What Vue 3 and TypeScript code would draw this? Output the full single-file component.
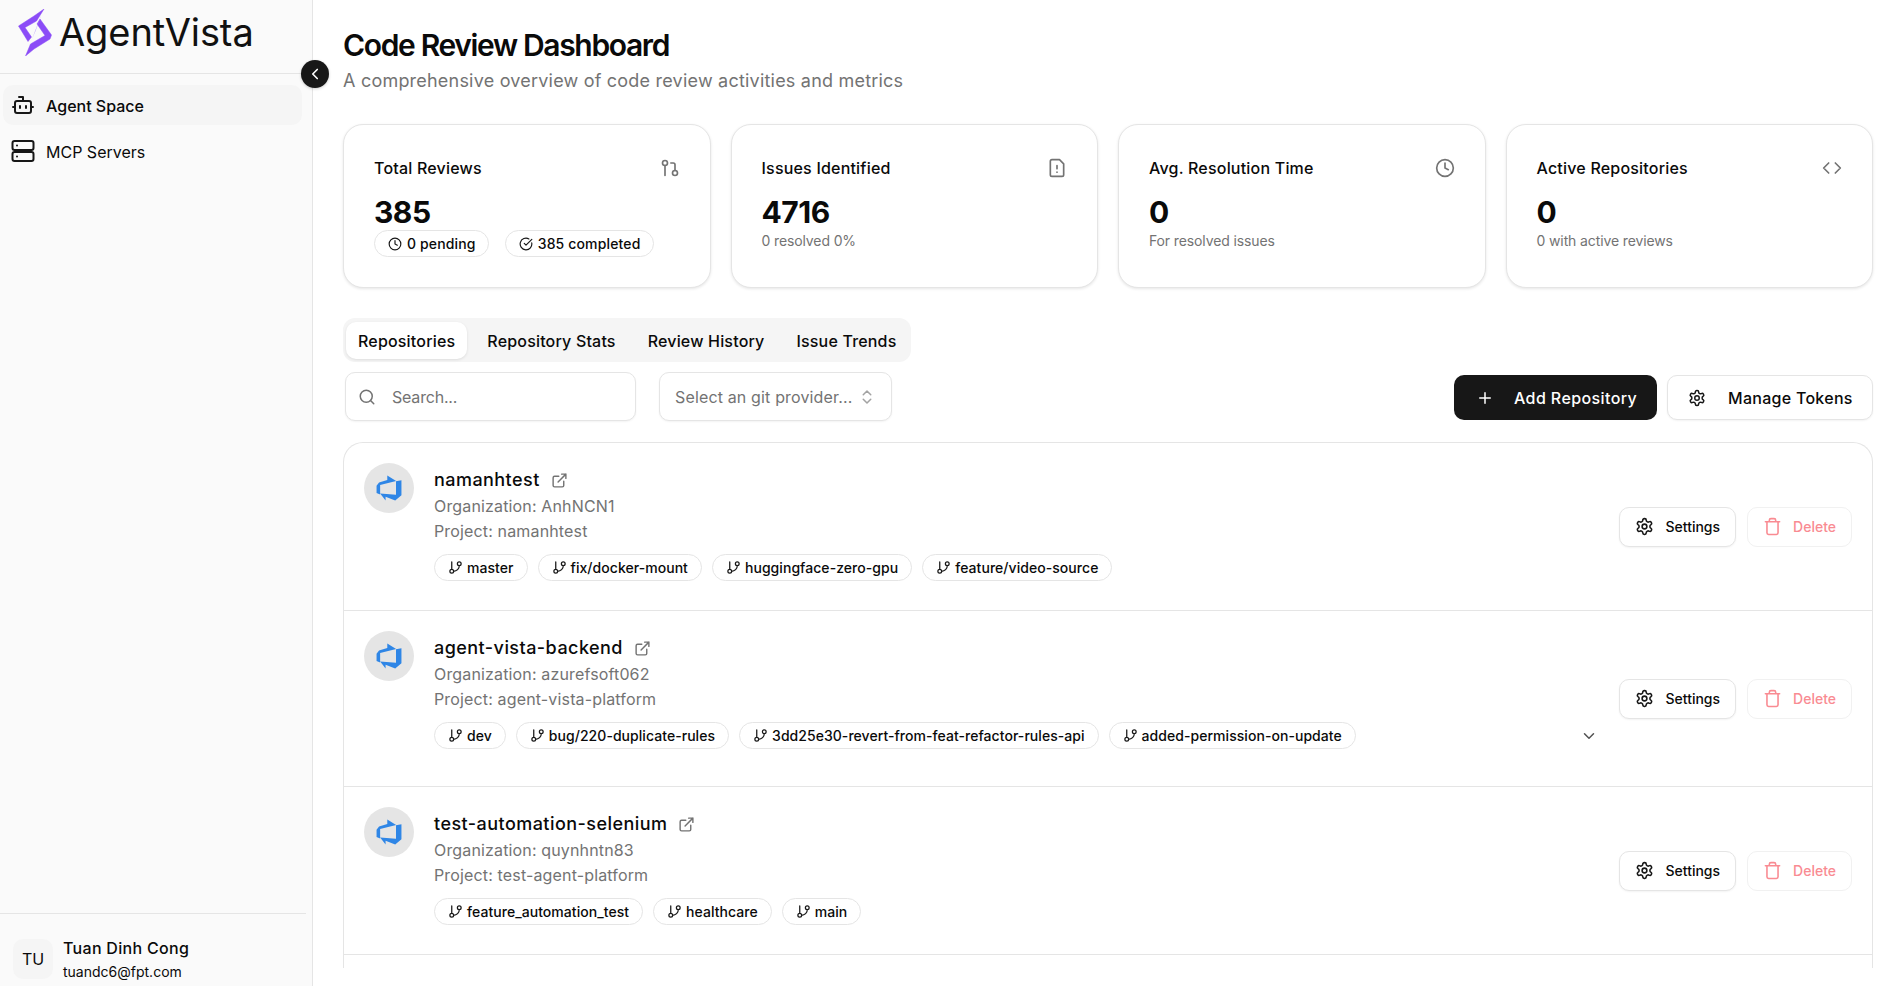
<script setup lang="ts">
interface Repo { name: string; org: string; project: string; branches: string[]; expand?: boolean }
const repos: Repo[] = [
  { name: 'namanhtest', org: 'AnhNCN1', project: 'namanhtest', branches: ['master', 'fix/docker-mount', 'huggingface-zero-gpu', 'feature/video-source'] },
  { name: 'agent-vista-backend', org: 'azurefsoft062', project: 'agent-vista-platform', branches: ['dev', 'bug/220-duplicate-rules', '3dd25e30-revert-from-feat-refactor-rules-api', 'added-permission-on-update'], expand: true },
  { name: 'test-automation-selenium', org: 'quynhntn83', project: 'test-agent-platform', branches: ['feature_automation_test', 'healthcare', 'main'] },
]
const tabs = ['Repositories', 'Repository Stats', 'Review History', 'Issue Trends']
</script>

<template>
  <div class="app">
    <aside class="side">
      <div class="brand">
        <svg class="logo" viewBox="0 0 34 47" width="34" height="47">
          <path fill="#8b4cf7" stroke="#8b4cf7" stroke-width=".5" stroke-linejoin="round" d="M0.500 17 L16 7 L26 0 L18.500 12 L7 18.500 L13.500 28 L10 32.500 Z" />
          <path fill="#8b4cf7" stroke="#8b4cf7" stroke-width=".5" stroke-linejoin="round" d="M22 10 L33.500 26 L32 30 L16 40 L7.500 47 L12.500 35 L27 26.500 L19 15 Z" />
          <path fill="#b592fa" d="M24 4 L14 30 L17.500 22 Z" />
        </svg>
        <span class="brand-name">AgentVista</span>
      </div>
      <button class="collapse">
        <svg viewBox="0 0 24 24" width="18" height="18" fill="none" stroke="#fff" stroke-width="2.2" stroke-linecap="round" stroke-linejoin="round"><path d="m15 18-6-6 6-6" /></svg>
      </button>
      <nav class="nav">
        <div class="nav-item active">
          <svg viewBox="0 0 24 24" width="24" height="24" fill="none" stroke="#171717" stroke-width="2" stroke-linecap="round" stroke-linejoin="round"><path d="M12 8V4H8" /><rect x="4" y="8" width="16" height="12" rx="2" /><path d="M2 14h2M20 14h2M15 13v2M9 13v2" /></svg>
          <span>Agent Space</span>
        </div>
        <div class="nav-item">
          <svg viewBox="0 0 24 24" width="24" height="24" fill="none" stroke="#171717" stroke-width="2" stroke-linecap="round" stroke-linejoin="round"><rect x="1.500" y="2" width="21" height="9" rx="2" /><rect x="1.500" y="13" width="21" height="9" rx="2" /><path d="M6 6.500h.01M6 17.500h.01" /></svg>
          <span class="plain">MCP Servers</span>
        </div>
      </nav>
      <div class="user">
        <div class="avatar">TU</div>
        <div class="user-text">
          <div class="user-name">Tuan Dinh Cong</div>
          <div class="user-mail">tuandc6@fpt.com</div>
        </div>
      </div>
    </aside>

    <main class="main">
      <h1 class="title">Code Review Dashboard</h1>
      <p class="subtitle">A comprehensive overview of code review activities and metrics</p>

      <section class="cards">
        <div class="card">
          <div class="card-head">
            <span>Total Reviews</span>
            <svg viewBox="0 0 24 24" width="20" height="20" fill="none" stroke="#737373" stroke-width="2" stroke-linecap="round" stroke-linejoin="round"><circle cx="18" cy="18" r="3" /><circle cx="6" cy="6" r="3" /><path d="M13 6h3a2 2 0 0 1 2 2v7M6 9v12" /></svg>
          </div>
          <div class="card-value">385</div>
          <div class="pills">
            <span class="pill">
              <svg viewBox="0 0 24 24" width="14" height="14" fill="none" stroke="#171717" stroke-width="2" stroke-linecap="round" stroke-linejoin="round"><circle cx="12" cy="12" r="10" /><path d="M12 6v6l4 2" /></svg>
              0 pending
            </span>
            <span class="pill">
              <svg viewBox="0 0 24 24" width="14" height="14" fill="none" stroke="#171717" stroke-width="2" stroke-linecap="round" stroke-linejoin="round"><path d="M21.800 10A10 10 0 1 1 17 3.300" /><path d="m9 11 3 3L22 4" /></svg>
              385 completed
            </span>
          </div>
        </div>
        <div class="card">
          <div class="card-head">
            <span>Issues Identified</span>
            <svg viewBox="0 0 24 24" width="20" height="20" fill="none" stroke="#737373" stroke-width="2" stroke-linecap="round" stroke-linejoin="round"><path d="M15 2H6a2 2 0 0 0-2 2v16a2 2 0 0 0 2 2h12a2 2 0 0 0 2-2V7Z" /><path d="M12 9v4M12 17h.01" /></svg>
          </div>
          <div class="card-value">4716</div>
          <div class="card-note">0 resolved 0%</div>
        </div>
        <div class="card">
          <div class="card-head">
            <span>Avg. Resolution Time</span>
            <svg viewBox="0 0 24 24" width="20" height="20" fill="none" stroke="#737373" stroke-width="2" stroke-linecap="round" stroke-linejoin="round"><circle cx="12" cy="12" r="10" /><path d="M12 6v6l4 2" /></svg>
          </div>
          <div class="card-value">0</div>
          <div class="card-note">For resolved issues</div>
        </div>
        <div class="card">
          <div class="card-head">
            <span>Active Repositories</span>
            <svg viewBox="0 0 24 24" width="20" height="20" fill="none" stroke="#737373" stroke-width="2" stroke-linecap="round" stroke-linejoin="round"><path d="m16 18 6-6-6-6M8 6l-6 6 6 6" /></svg>
          </div>
          <div class="card-value">0</div>
          <div class="card-note">0 with active reviews</div>
        </div>
      </section>

      <div class="tabs">
        <button v-for="(t, i) in tabs" :key="t" class="tab" :class="{ on: i === 0 }">{{ t }}</button>
      </div>

      <div class="toolbar">
        <div class="field search">
          <svg viewBox="0 0 24 24" width="18" height="18" fill="none" stroke="#737373" stroke-width="2" stroke-linecap="round" stroke-linejoin="round"><circle cx="11" cy="11" r="8" /><path d="m21 21-4.300-4.300" /></svg>
          <span>Search...</span>
        </div>
        <div class="field select">
          <span>Select an git provider...</span>
          <svg viewBox="0 0 24 24" width="18" height="18" fill="none" stroke="#a3a3a3" stroke-width="2" stroke-linecap="round" stroke-linejoin="round"><path d="m7 15 5 5 5-5M7 9l5-5 5 5" /></svg>
        </div>
        <div class="spacer"></div>
        <button class="btn dark">
          <svg viewBox="0 0 24 24" width="18" height="18" fill="none" stroke="#fff" stroke-width="2" stroke-linecap="round"><path d="M5 12h14M12 5v14" /></svg>
          Add Repository
        </button>
        <button class="btn light">
          <svg viewBox="0 0 24 24" width="18" height="18" fill="none" stroke="#171717" stroke-width="2" stroke-linecap="round" stroke-linejoin="round"><path d="M12.220 2h-.44a2 2 0 0 0-2 2v.18a2 2 0 0 1-1 1.730l-.43.25a2 2 0 0 1-2 0l-.15-.08a2 2 0 0 0-2.730.73l-.22.38a2 2 0 0 0 .73 2.730l.15.1a2 2 0 0 1 1 1.720v.51a2 2 0 0 1-1 1.740l-.15.09a2 2 0 0 0-.73 2.730l.22.38a2 2 0 0 0 2.730.73l.15-.08a2 2 0 0 1 2 0l.43.25a2 2 0 0 1 1 1.730V20a2 2 0 0 0 2 2h.44a2 2 0 0 0 2-2v-.18a2 2 0 0 1 1-1.730l.43-.25a2 2 0 0 1 2 0l.15.08a2 2 0 0 0 2.730-.73l.22-.39a2 2 0 0 0-.73-2.730l-.15-.08a2 2 0 0 1-1-1.740v-.5a2 2 0 0 1 1-1.740l.15-.09a2 2 0 0 0 .73-2.730l-.22-.38a2 2 0 0 0-2.730-.73l-.15.08a2 2 0 0 1-2 0l-.43-.25a2 2 0 0 1-1-1.730V4a2 2 0 0 0-2-2z" /><circle cx="12" cy="12" r="3" /></svg>
          Manage Tokens
        </button>
      </div>

      <section class="list">
        <article v-for="r in repos" :key="r.name" class="row" :class="{ tall: r.expand }">
          <div class="repo-left">
            <div class="repo-icon">
              <svg viewBox="0 0 18 18" width="28" height="28"><path fill="#2f86e6" d="M17 4v9.700l-4 3.300-6.200-2.300v2.300L3.300 12.600l10.200.8V4.600L17 4ZM13.600 4.500 7.900 1v2.900L2.600 5.400 1 7.500v4.700l2.300 1V7.100l10.300-2.600Z" /></svg>
            </div>
            <div class="repo-body">
              <div class="repo-name">
                {{ r.name }}
                <svg viewBox="0 0 24 24" width="17" height="17" fill="none" stroke="#737373" stroke-width="2" stroke-linecap="round" stroke-linejoin="round"><path d="M15 3h6v6M10 14 21 3M18 13v6a2 2 0 0 1-2 2H5a2 2 0 0 1-2-2V8a2 2 0 0 1 2-2h6" /></svg>
              </div>
              <div class="repo-meta">Organization: {{ r.org }}</div>
              <div class="repo-meta">Project: {{ r.project }}</div>
              <div class="branches">
                <span v-for="b in r.branches" :key="b" class="branch">
                  <svg viewBox="0 0 24 24" width="15" height="15" fill="none" stroke="#171717" stroke-width="2" stroke-linecap="round" stroke-linejoin="round"><path d="M6 3v12M18 9a3 3 0 1 0 0-6 3 3 0 0 0 0 6ZM6 21a3 3 0 1 0 0-6 3 3 0 0 0 0 6ZM18 9a9 9 0 0 1-9 9" /></svg>
                  {{ b }}
                </span>
                <svg v-if="r.expand" class="chev" viewBox="0 0 24 24" width="18" height="18" fill="none" stroke="#525252" stroke-width="2" stroke-linecap="round" stroke-linejoin="round"><path d="m6 9 6 6 6-6" /></svg>
              </div>
            </div>
          </div>
          <div class="actions">
            <button class="act">
              <svg viewBox="0 0 24 24" width="19" height="19" fill="none" stroke="#171717" stroke-width="2" stroke-linecap="round" stroke-linejoin="round"><path d="M12.220 2h-.44a2 2 0 0 0-2 2v.18a2 2 0 0 1-1 1.730l-.43.25a2 2 0 0 1-2 0l-.15-.08a2 2 0 0 0-2.730.73l-.22.38a2 2 0 0 0 .73 2.730l.15.1a2 2 0 0 1 1 1.720v.51a2 2 0 0 1-1 1.740l-.15.09a2 2 0 0 0-.73 2.730l.22.38a2 2 0 0 0 2.730.73l.15-.08a2 2 0 0 1 2 0l.43.25a2 2 0 0 1 1 1.730V20a2 2 0 0 0 2 2h.44a2 2 0 0 0 2-2v-.18a2 2 0 0 1 1-1.730l.43-.25a2 2 0 0 1 2 0l.15.08a2 2 0 0 0 2.730-.73l.22-.39a2 2 0 0 0-.73-2.730l-.15-.08a2 2 0 0 1-1-1.740v-.5a2 2 0 0 1 1-1.740l.15-.09a2 2 0 0 0 .73-2.730l-.22-.38a2 2 0 0 0-2.730-.73l-.15.08a2 2 0 0 1-2 0l-.43-.25a2 2 0 0 1-1-1.730V4a2 2 0 0 0-2-2z" /><circle cx="12" cy="12" r="3" /></svg>
              Settings
            </button>
            <button class="act danger">
              <svg viewBox="0 0 24 24" width="19" height="19" fill="none" stroke="#f98b92" stroke-width="2" stroke-linecap="round" stroke-linejoin="round"><path d="M3 6h18M19 6v14a2 2 0 0 1-2 2H7a2 2 0 0 1-2-2V6M8 6V4a2 2 0 0 1 2-2h4a2 2 0 0 1 2 2v2" /></svg>
              Delete
            </button>
          </div>
        </article>
      </section>
    </main>
  </div>
</template>

<style>
html, body { margin: 0; background: #fff; overflow: hidden; }
</style>

<style scoped>
.app { display: flex; width: 1878px; height: 986px; overflow: hidden; font-family: Inter, "Noto Sans", sans-serif; color: #0a0a0a; }
button { font-family: inherit; cursor: pointer; }

.side { position: relative; width: 313px; flex: none; box-sizing: border-box; height: 986px; background: #fafafa; border-right: 1px solid #e5e5e5; display: flex; flex-direction: column; }
.brand { height: 74px; box-sizing: border-box; border-bottom: 1px solid #e5e5e5; display: flex; align-items: center; gap: 7px; padding: 0 0 9px 18px; }
.logo { flex: none; }
.brand-name { font-size: 38px; line-height: 46px; font-weight: 400; letter-spacing: -0.1px; color: #111; }
.collapse { position: absolute; top: 60px; right: -17px; width: 28px; height: 28px; border-radius: 50%; border: none; background: #171717; padding: 0; display: flex; align-items: center; justify-content: center; box-shadow: 0 1px 3px rgba(0,0,0,.2); }
.nav { padding: 11px 10px 0 3px; display: flex; flex-direction: column; gap: 6px; flex: 1; }
.nav-item { height: 40px; border-radius: 10px; display: flex; align-items: center; gap: 11px; padding-left: 8px; font-size: 16px; font-weight: 500; }
.nav-item span { padding-top: 2px; }
.nav-item.active { background: #f5f5f5; }
.nav-item .plain { font-weight: 400; }
.user { margin-right: 6px; height: 73px; box-sizing: border-box; border-top: 1px solid #e5e5e5; display: flex; align-items: center; gap: 10px; padding: 18px 0 0 13px; }
.avatar { width: 40px; height: 40px; border-radius: 10px; background: #f5f5f5; display: flex; align-items: center; justify-content: center; font-size: 16px; }
.user-name { font-size: 16px; font-weight: 500; line-height: 22px; letter-spacing: .3px; }
.user-mail { font-size: 14px; line-height: 20px; margin-top: 3px; }

.main { flex: 1; min-width: 0; box-sizing: border-box; padding: 27px 5px 0 30px; }
.title { margin: 0; font-size: 30px; line-height: 36px; font-weight: 600; letter-spacing: -1.35px; }
.subtitle { margin: 4px 0 0; font-size: 18px; line-height: 28px; color: #737373; letter-spacing: .21px; }

.cards { display: grid; grid-template-columns: repeat(4, 1fr); gap: 20px; margin-top: 29px; }
.card { height: 164px; box-sizing: border-box; border: 1px solid #e5e5e5; border-radius: 20px; background: #fff; box-shadow: 0 1px 3px rgba(0,0,0,.1); padding: 31px 30px 0; }
.card-head { display: flex; justify-content: space-between; align-items: center; font-size: 16px; font-weight: 500; line-height: 24px; letter-spacing: .2px; }
.card-value { font-size: 30px; line-height: 36px; font-weight: 700; margin-top: 14px; letter-spacing: -.5px; }
.card-note { font-size: 14px; line-height: 20px; color: #737373; margin-top: 1px; letter-spacing: -.12px; }
.pills { display: flex; gap: 16px; margin-top: 0; }
.pill { display: inline-flex; align-items: center; gap: 5px; height: 27px; box-sizing: border-box; padding: 0 12px 0 13px; border: 1px solid #e5e5e5; border-radius: 14px; font-size: 14px; font-weight: 500; letter-spacing: .15px; }

.tabs { display: inline-flex; align-items: center; margin-top: 30px; height: 44px; box-sizing: border-box; padding: 0 3px; background: #f5f5f5; border-radius: 12px; gap: 8px; vertical-align: top; }
.tab { height: 37px; border: none; background: none; border-radius: 10px; padding: 2px 12px 0; font-size: 16px; font-weight: 500; color: #0a0a0a; letter-spacing: .18px; }
.tab.on { background: #fff; box-shadow: 0 1px 3px rgba(0,0,0,.1); }

.toolbar { display: flex; align-items: center; margin-top: 10px; padding-left: 2px; }
.field { height: 49px; box-sizing: border-box; border: 1px solid #e5e5e5; border-radius: 10px; background: #fff; box-shadow: 0 1px 2px rgba(0,0,0,.05); display: flex; align-items: center; font-size: 16px; color: #737373; }
.search { width: 291px; padding-left: 12px; gap: 16px; letter-spacing: -.2px; }
.select { width: 233px; margin-left: 23px; padding: 0 15px; justify-content: space-between; letter-spacing: .15px; }
.spacer { flex: 1; }
.btn { height: 45px; box-sizing: border-box; border-radius: 10px; font-size: 16px; font-weight: 500; display: inline-flex; align-items: center; margin-top: 2px; }
.dark { width: 203px; background: #171717; color: #fff; border: none; padding: 0 0 0 22px; gap: 20px; letter-spacing: .4px; }
.light { width: 206px; margin-left: 10px; background: #fff; color: #0a0a0a; border: 1px solid #e5e5e5; padding: 0 0 0 20px; gap: 22px; box-shadow: 0 1px 2px rgba(0,0,0,.05); letter-spacing: .28px; }

.list { margin-top: 21px; border: 1px solid #e5e5e5; border-bottom: none; border-radius: 20px 20px 0 0; height: 526px; box-sizing: border-box; }
.row { height: 168px; box-sizing: border-box; border-bottom: 1px solid #e5e5e5; display: flex; align-items: center; padding: 0 20px; }
.row.tall { height: 176px; }
.repo-left { flex: 1; min-width: 0; display: flex; align-self: flex-start; padding-top: 20px; }
.repo-icon { width: 50px; height: 50px; border-radius: 50%; background: #e5e5e5; display: flex; align-items: center; justify-content: center; flex: none; }
.repo-body { flex: 1; min-width: 0; margin-left: 20px; padding-top: 3px; }
.repo-name { display: flex; align-items: center; gap: 11px; font-size: 18px; font-weight: 500; line-height: 28px; letter-spacing: .45px; }
.repo-meta { font-size: 16px; line-height: 25px; color: #737373; letter-spacing: .15px; }
.branches { display: flex; align-items: center; gap: 10px; margin-top: 10px; position: relative; }
.branch { display: inline-flex; align-items: center; gap: 4px; height: 27px; box-sizing: border-box; padding: 0 13px; border: 1px solid #e5e5e5; border-radius: 14px; font-size: 14px; font-weight: 500; letter-spacing: .05px; }
.chev { position: absolute; right: 1px; top: 5px; }
.actions { display: flex; gap: 11px; align-items: center; flex: none; margin-left: 20px; }
.act { height: 40px; box-sizing: border-box; border: 1px solid #e5e5e5; border-radius: 10px; background: #fff; display: inline-flex; align-items: center; gap: 11px; padding: 0 15px; font-size: 14px; font-weight: 500; color: #0a0a0a; box-shadow: 0 1px 2px rgba(0,0,0,.05); }
.danger { color: #f98b92; border-color: #f1f1f1; box-shadow: none; }
</style>
